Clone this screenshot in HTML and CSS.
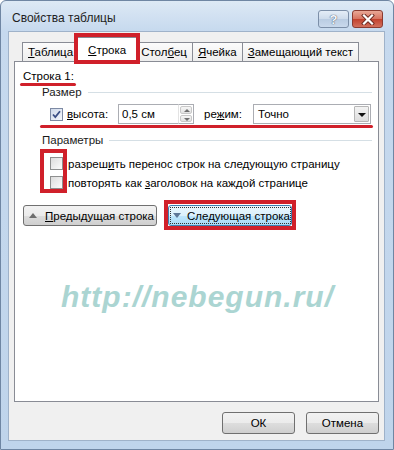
FILE: index.html
```html
<!DOCTYPE html>
<html lang="ru">
<head>
    <meta charset="UTF-8">
    <title>Свойства таблицы</title>
    <link rel="stylesheet" href="styles.css">
</head>
<body>
    <div class="window">
        <div class="titlebar">
            <span class="title">Свойства таблицы</span>
            <div class="caption-buttons">
                <span class="cap-btn help">?</span>
                <span class="cap-btn close">
                    <svg width="14" height="11" viewBox="0 0 14 11">
                        <path d="M3 1.5 L11 9.5 M11 1.5 L3 9.5" stroke="#6b2a22" stroke-width="4" stroke-linecap="square"/>
                        <path d="M3 1.5 L11 9.5 M11 1.5 L3 9.5" stroke="#fff" stroke-width="2.2" stroke-linecap="square"/>
                    </svg>
                </span>
            </div>
        </div>

        <div class="dialog-body">
            <div class="tabs">
                <span class="tab"><u>Т</u>аблица</span>
                <span class="tab active"><u>С</u>трока</span>
                <span class="tab">Стол<u>б</u>ец</span>
                <span class="tab"><u>Я</u>чейка</span>
                <span class="tab"><u>З</u>амещающий текст</span>
            </div>

            <div class="panel">
                <div class="row-title"><span class="marked">Строка 1:</span></div>

                <div class="group">
                    <div class="legend"><span>Размер</span><span class="legend-line"></span></div>
                    <div class="size-row">
                        <span class="checkbox checked">
                            <svg width="11" height="11" viewBox="0 0 11 11">
                                <path d="M2 5.5 L4.3 8 L9 2.2" fill="none" stroke="#3b4f86" stroke-width="1.8"/>
                            </svg>
                        </span>
                        <span class="size-label"><u>в</u>ысота:</span>
                        <span class="textbox">0,5 см</span>
                        <span class="spinner">
                            <span class="spin up"></span>
                            <span class="spin down"></span>
                        </span>
                        <span class="mode-label">ре<u>ж</u>им:</span>
                        <span class="select">
                            <span class="select-text">Точно</span>
                            <span class="select-btn"></span>
                        </span>
                    </div>
                </div>

                <div class="group params">
                    <div class="legend"><span>Параметры</span><span class="legend-line"></span></div>
                    <div class="options">
                        <div class="option"><span class="checkbox"></span><span>разреш<u>и</u>ть перенос строк на следующую страницу</span></div>
                        <div class="option"><span class="checkbox"></span><span>повторять как <u>з</u>аголовок на каждой странице</span></div>
                    </div>
                </div>

                <div class="nav-row">
                    <button class="btn prev"><span class="arrow-up"></span><span class="btn-text"><u>П</u>редыдущая строка</span></button>
                    <button class="btn next"><span class="focus-ring"><span class="arrow-down"></span><span class="btn-text">Следующая строка</span></span></button>
                </div>

                <div class="watermark">http://nebegun.ru/</div>
            </div>

            <div class="footer">
                <button class="btn footer-btn">ОК</button>
                <button class="btn footer-btn">Отмена</button>
            </div>
        </div>
    </div>
</body>
</html>
```

FILE: styles.css
```css
body {
    margin: 0;
    font-family: "Liberation Sans", Arial, sans-serif;
    font-size: 11.5px;
    color: #000;
}

/* window frame */
.window {
    width: 394px;
    height: 450px;
    box-sizing: border-box;
    display: flex;
    flex-direction: column;
    padding: 0 8px 8px 7px;
    border: 1px solid #6f86a3;
    border-radius: 6px 6px 0 0;
    background: linear-gradient(#dde9f5, #c6d9ee 30px, #bfd4eb);
}

.titlebar {
    height: 30px;
    display: flex;
    justify-content: space-between;
    align-items: flex-start;
}

.title {
    margin: 10px 0 0 4px;
    font-size: 12px;
    color: #1e1e1e;
}

.caption-buttons {
    display: flex;
    gap: 3px;
    margin: 9px 2px 0 0;
}

.cap-btn {
    width: 29px;
    height: 16px;
    border: 1px solid #7c8fa8;
    border-radius: 3px;
    display: flex;
    align-items: center;
    justify-content: center;
}

.help {
    background: linear-gradient(#e4edf7, #cddbeb 50%, #b9cce2 51%, #c9d9ec);
    color: #f4f7fb;
    font-weight: bold;
    font-size: 13px;
    text-shadow: 0 0 1px #4a5a70, 0 0 1px #4a5a70;
}

.close {
    border-color: #8b3b31;
    background: linear-gradient(#e9a897, #d7725f 50%, #c2412d 51%, #d2705d);
}

/* dialog client area */
.dialog-body {
    flex: 1;
    display: flex;
    flex-direction: column;
    background: #f0f0f0;
    border: 1px solid #9fb2c9;
    padding: 0 5px 6px 5px;
}

.tabs {
    height: 30px;
    display: flex;
    align-items: flex-end;
    padding-left: 9px;
    margin-bottom: -1px;
    position: relative;
    z-index: 1;
}

.tab {
    height: 18px;
    line-height: 18px;
    padding: 0 5px;
    margin: 0 0 1px -1px;
    border: 1px solid #898c95;
    border-bottom: none;
    background: linear-gradient(#fcfcfc, #ededed);
    white-space: nowrap;
}

.tab.active {
    height: 24px;
    line-height: 24px;
    margin: 0 -2px 0 -3px;
    padding: 0 11px;
    background: #fff;
    position: relative;
    z-index: 2;
}

.tab.active::after {
    content: "";
    position: absolute;
    top: -5px;
    left: -3px;
    right: -3px;
    bottom: -2px;
    border: 4px solid #d0202a;
}

.panel {
    flex: 1;
    background: #fff;
    border: 1px solid #898c95;
    padding: 7px 6px 0 8px;
}

.row-title {
    line-height: 15px;
}

.marked {
    position: relative;
}

.marked::after {
    content: "";
    position: absolute;
    left: -3px;
    right: -2px;
    bottom: -4px;
    height: 3px;
    border-radius: 2px;
    background: #d0202a;
}

.group {
    margin: 1px 0 0 19px;
}

.legend {
    display: flex;
    align-items: center;
    line-height: 15px;
    color: #1a1a1a;
}

.legend-line {
    flex: 1;
    margin-left: 6px;
    border-top: 1px solid #d5dfe5;
}

.size-row {
    display: flex;
    align-items: center;
    height: 20px;
    margin-top: 4px;
    padding-left: 8px;
    position: relative;
}

.size-row::after {
    content: "";
    position: absolute;
    left: -2px;
    right: -1px;
    bottom: -4px;
    height: 3px;
    border-radius: 2px;
    background: #d0202a;
}

.checkbox {
    width: 11px;
    height: 11px;
    border: 1px solid #8e8f8f;
    background: linear-gradient(135deg, #dcdcdc, #fcfcfc);
    display: flex;
    align-items: center;
    justify-content: center;
    flex: none;
}

.checkbox.checked {
    background: linear-gradient(135deg, #cfd9ea, #f4f7fc);
    border-color: #7d8aa4;
}

.size-label {
    margin-left: 4px;
    width: 51px;
}

.textbox {
    width: 56px;
    height: 18px;
    line-height: 18px;
    padding-left: 3px;
    border: 1px solid #abadb3;
    border-right: none;
}

.spinner {
    width: 16px;
    height: 20px;
    display: flex;
    flex-direction: column;
    border: 1px solid #abadb3;
    border-left: 1px solid #e3e3e3;
    box-sizing: border-box;
    padding: 1px;
    gap: 1px;
}

.spin {
    flex: 1;
    border: 1px solid #c8c8c8;
    border-radius: 2px;
    background: linear-gradient(#f6f6f6, #e2e2e2);
    position: relative;
}

.spin::after {
    content: "";
    position: absolute;
    left: 3px;
    top: 2px;
    border-left: 3px solid transparent;
    border-right: 3px solid transparent;
}

.spin.up::after {
    border-bottom: 3px solid #6f6f6f;
}

.spin.down::after {
    top: 2px;
    border-top: 3px solid #6f6f6f;
}

.mode-label {
    margin-left: 10px;
    width: 49px;
}

.select {
    flex: 1;
    height: 18px;
    margin-right: 1px;
    border: 1px solid #abadb3;
    display: flex;
    align-items: center;
    justify-content: space-between;
}

.select-text {
    padding-left: 4px;
}

.select-btn {
    width: 15px;
    height: 16px;
    margin-right: 1px;
    border: 1px solid #b6b6b6;
    border-radius: 1px;
    box-sizing: border-box;
    background: linear-gradient(#f3f3f3, #dedede);
    position: relative;
}

.select-btn::after {
    content: "";
    position: absolute;
    left: 3px;
    top: 6px;
    border-left: 4px solid transparent;
    border-right: 4px solid transparent;
    border-top: 4px solid #111;
}

.params {
    margin-top: 9px;
}

.options {
    margin-top: 6px;
    position: relative;
}

.options::before {
    content: "";
    position: absolute;
    left: -2px;
    top: -5px;
    width: 19px;
    bottom: -1px;
    border: 4px solid #d0202a;
}

.option {
    display: flex;
    align-items: center;
    height: 19px;
    padding-left: 8px;
    gap: 5px;
    white-space: nowrap;
}

.nav-row {
    display: flex;
    gap: 11px;
    margin-top: 13px;
}

/* push buttons */
.btn {
    font-family: inherit;
    font-size: 11.5px;
    color: #000;
    border: 1px solid #707070;
    border-radius: 3px;
    background: linear-gradient(#f2f2f2, #ebebeb 50%, #dddddd 51%, #cfcfcf);
    padding: 0;
    display: flex;
    align-items: center;
    white-space: nowrap;
}

.prev {
    width: 134px;
    height: 21px;
    padding-left: 5px;
    gap: 8px;
}

.arrow-up {
    border-left: 4px solid transparent;
    border-right: 4px solid transparent;
    border-bottom: 5px solid #6e6e6e;
}

.next {
    width: 124px;
    height: 21px;
    padding: 1px;
    border-color: #3c7fb1;
    background: linear-gradient(#eaf6fd, #d9f0fc 50%, #bee6fd 51%, #a7d9f5);
    position: relative;
}

.next::after {
    content: "";
    position: absolute;
    top: -6px;
    left: -5px;
    right: -5px;
    bottom: -5px;
    border: 4px solid #d0202a;
}

.focus-ring {
    flex: 1;
    height: 100%;
    box-sizing: border-box;
    border: 1px dotted #333;
    display: flex;
    align-items: center;
    gap: 6px;
    padding-left: 2px;
}

.arrow-down {
    border-left: 4px solid transparent;
    border-right: 4px solid transparent;
    border-top: 5px solid #5d7797;
}

.watermark {
    margin-top: 54px;
    text-align: center;
    font-size: 30px;
    line-height: 34px;
    font-weight: bold;
    font-style: italic;
    letter-spacing: 1px;
    color: #abd5d2;
}

.footer {
    display: flex;
    justify-content: flex-end;
    gap: 11px;
    padding-top: 10px;
}

.footer-btn {
    width: 73px;
    height: 22px;
    justify-content: center;
}
```
